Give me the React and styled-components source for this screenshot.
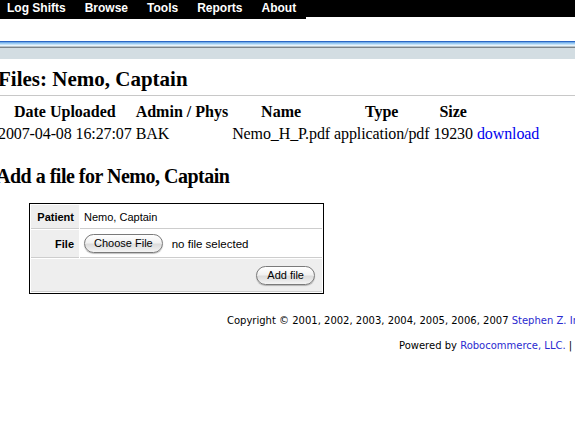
import React from "react";
import styled, { createGlobalStyle } from "styled-components";

const GlobalStyle = createGlobalStyle`
  html, body {
    margin: 0;
    padding: 0;
    background: #fff;
    overflow: hidden;
  }
  body {
    font-family: "Liberation Serif", "Times New Roman", serif;
    color: #000;
  }
`;

const menuItems = ["Log Shifts", "Browse", "Tools", "Reports", "About"];

const files = [
  {
    uploaded: "2007-04-08 16:27:07",
    admin: "BAK",
    name: "Nemo_H_P.pdf",
    type: "application/pdf",
    size: "19230",
  },
];

function App() {
  return (
    <Page>
      <GlobalStyle />
      <NavBar>
        <Menu>
          {menuItems.map((item) => (
            <MenuItem key={item}>{item}</MenuItem>
          ))}
        </Menu>
      </NavBar>
      <HeaderStrip />

      <Content>
        <Title>Files: Nemo, Captain</Title>
        <Rule />
        <FileTable>
          <thead>
            <tr>
              <Th>Date Uploaded</Th>
              <Th>Admin / Phys</Th>
              <Th>Name</Th>
              <Th>Type</Th>
              <Th>Size</Th>
              <Th></Th>
            </tr>
          </thead>
          <tbody>
            {files.map((f) => (
              <tr key={f.name}>
                <Td>{f.uploaded}</Td>
                <Td>{f.admin}</Td>
                <Td>{f.name}</Td>
                <Td>{f.type}</Td>
                <Td>{f.size}</Td>
                <Td>
                  <Link href="#">download</Link>
                </Td>
              </tr>
            ))}
          </tbody>
        </FileTable>

        <SubTitle>Add a file for Nemo, Captain</SubTitle>

        <FormBox>
          <Label $h={24}>Patient</Label>
          <Value $h={24}>Nemo, Captain</Value>
          <Label $h={28}>File</Label>
          <Value $h={28}>
            <PillButton type="button" $pad={9}>Choose File</PillButton>
            <NoFile>no file selected</NoFile>
          </Value>
          <Actions>
            <PillButton type="button" $pad={10}>Add file</PillButton>
          </Actions>
        </FormBox>

        <Footer>
          <FooterLine $indent={229}>
            Copyright © 2001, 2002, 2003, 2004, 2005, 2006, 2007{" "}
            <FooterLink href="#">Stephen Z. Intille</FooterLink>
          </FooterLine>
          <FooterLine $indent={401}>
            Powered by <FooterLink href="#">Robocommerce, LLC.</FooterLink> |
          </FooterLine>
        </Footer>
      </Content>
    </Page>
  );
}

const Page = styled.div`
  width: 575px;
  height: 423px;
  overflow: hidden;
`;

const NavBar = styled.div`
  height: 17px;
  background: #000;
  display: flex;
`;

const Menu = styled.ul`
  list-style: none;
  margin: 0;
  padding: 0 10px 0 7px;
  height: 19px;
  background: #000;
  display: flex;
  gap: 19px;
`;

const MenuItem = styled.li`
  font-family: "Liberation Sans", Arial, sans-serif;
  font-weight: bold;
  font-size: 12px;
  line-height: 17px;
  color: #fff;
  white-space: nowrap;
`;

const HeaderStrip = styled.div`
  margin-top: 24px;
  height: 18px;
  background: linear-gradient(
    to bottom,
    #2b67c4 0,
    #2b67c4 1px,
    #75aee9 1px,
    #75aee9 2px,
    #9ccbf2 2px,
    #9ccbf2 3px,
    #c4e2f8 3px,
    #c4e2f8 4px,
    #e9f4fb 4px,
    #e9f4fb 5px,
    #b9c3c9 5px,
    #b9c3c9 6px,
    #7d858a 6px,
    #7d858a 7px,
    #d3dde2 7px,
    #d3dde2 100%
  );
`;

const Content = styled.div`
  margin-left: -2px;
`;

const Title = styled.h2`
  margin: 8px 0 0;
  font-size: 21px;
  line-height: 24px;
  font-weight: bold;
  white-space: nowrap;
`;

const SubTitle = styled(Title)`
  margin-top: 18px;
  margin-left: -2px;
  font-size: 20px;
  letter-spacing: -0.5px;
`;

const Rule = styled.div`
  margin: 4px 0 0 2px;
  height: 1px;
  background: #c8c8c8;
`;

const FileTable = styled.table`
  margin: 4px 0 0 -3px;
  border-collapse: separate;
  border-spacing: 2px;
  font-size: 16px;
  line-height: 18px;
  white-space: nowrap;
`;

const Th = styled.th`
  padding: 1px;
  font-weight: bold;
  text-align: center;
`;

const Td = styled.td`
  padding: 1px;
  text-align: left;
  letter-spacing: -0.1px;
`;

const Link = styled.a`
  color: #0000ee;
  text-decoration: none;
`;

const FormBox = styled.div`
  margin: 15px 0 0 31px;
  border: 1px solid #000;
  padding: 1px;
  box-sizing: border-box;
  width: 295px;
  display: grid;
  grid-template-columns: 48px 1fr;
  gap: 1px;
  font-family: "Liberation Sans", Arial, sans-serif;
  font-size: 11px;
`;

const Cell = styled.div`
  height: ${(p) => p.$h}px;
  box-sizing: border-box;
  border-bottom: 1px solid #cdcdcd;
  display: flex;
  align-items: center;
`;

const Label = styled(Cell)`
  background: #eeeeee;
  justify-content: flex-end;
  padding-right: 5px;
  font-weight: bold;
`;

const Value = styled(Cell)`
  background: #fff;
  padding-left: 4px;
  gap: 9px;
`;

const Actions = styled(Cell).attrs({ $h: 33 })`
  grid-column: 1 / span 2;
  background: #eeeeee;
  justify-content: flex-end;
  padding: 0 7px 0 0;
`;

const PillButton = styled.button`
  font-family: "Liberation Sans", Arial, sans-serif;
  font-size: 11px;
  color: #000;
  height: 19px;
  padding: 0 ${(p) => p.$pad}px;
  margin: 0;
  border: 1px solid #7a7a7a;
  border-radius: 10px;
  background: linear-gradient(to bottom, #ffffff 0%, #f1f1f1 45%, #dcdcdc 55%, #f4f4f4 100%);
  box-shadow: 0 1px 1px rgba(0, 0, 0, 0.25);
  line-height: 17px;
`;

const NoFile = styled.span`
  font-size: 11.5px;
`;

const Footer = styled.div`
  margin-top: 20px;
  font-family: "DejaVu Sans", Verdana, sans-serif;
  font-size: 10px;
  line-height: 14px;
  color: #000;
`;

const FooterLine = styled.div`
  padding-left: ${(p) => p.$indent}px;
  white-space: nowrap;
  & + & {
    margin-top: 11px;
  }
`;

const FooterLink = styled.a`
  color: #2a2ad0;
  text-decoration: none;
`;

export default App;
